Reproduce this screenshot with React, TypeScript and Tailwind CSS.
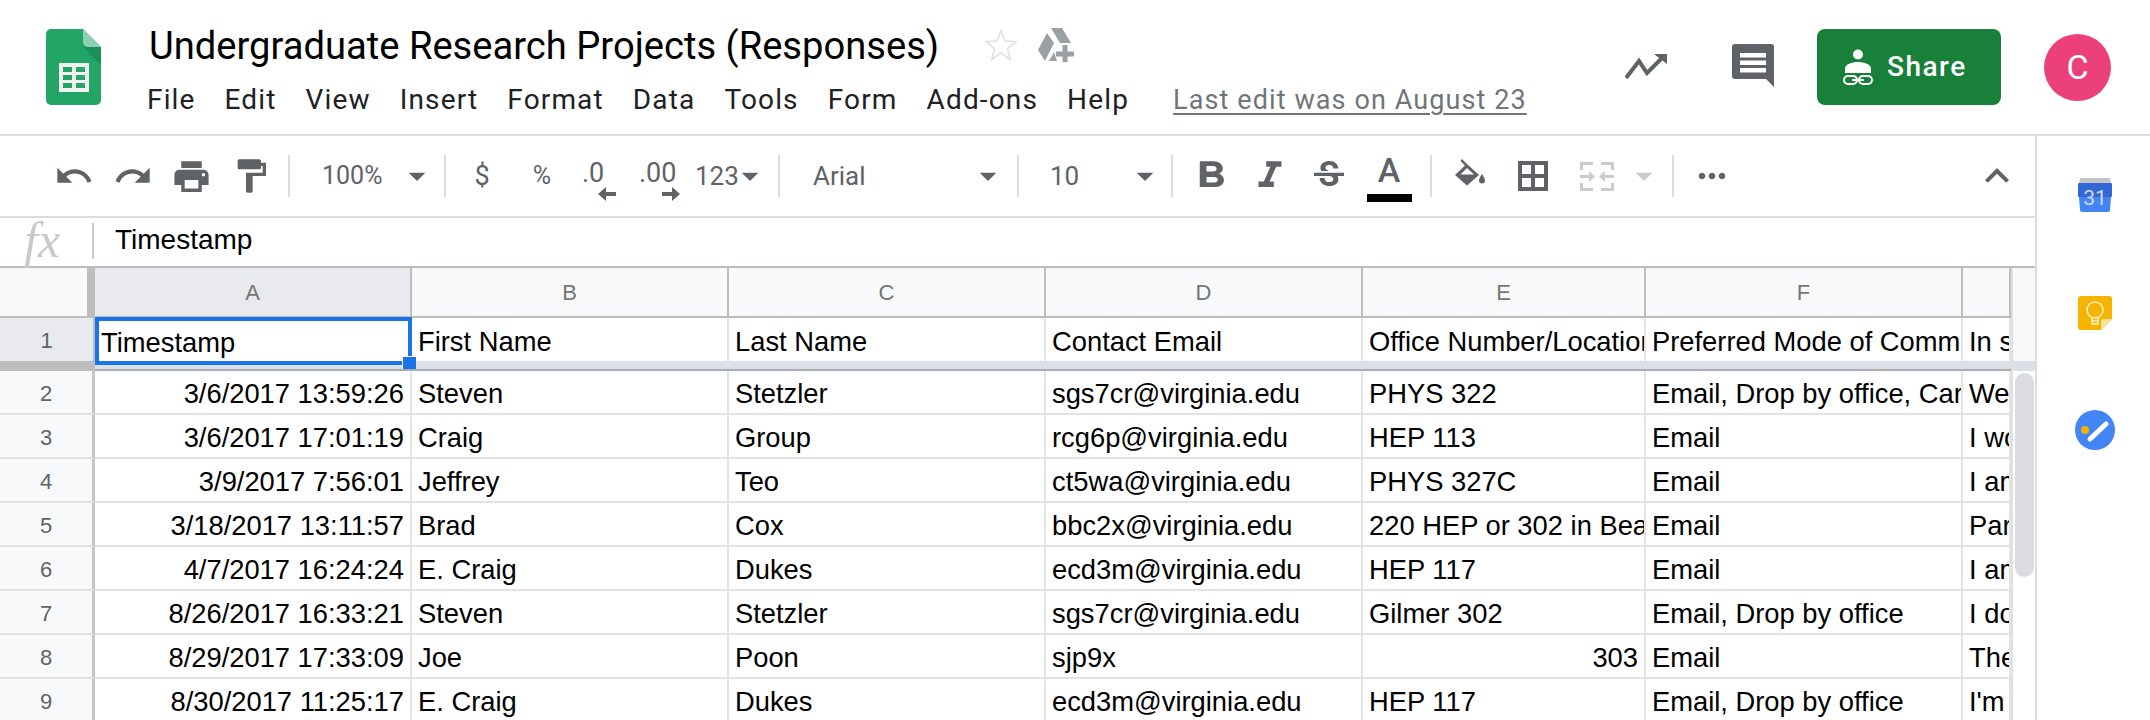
import React from "react";
import {
  MdUndo, MdRedo, MdPrint, MdFormatPaint, MdArrowDropDown, MdFormatBold, MdFormatItalic,
  MdStrikethroughS, MdMoreHoriz, MdExpandLess,
} from "react-icons/md";

const rows: [string, string, string, string, string, string, string, string][] = [
  ["2", "3/6/2017 13:59:26", "Steven", "Stetzler", "sgs7cr@virginia.edu", "PHYS 322", "Email, Drop by office, Career", "We would"],
  ["3", "3/6/2017 17:01:19", "Craig", "Group", "rcg6p@virginia.edu", "HEP 113", "Email", "I would"],
  ["4", "3/9/2017 7:56:01", "Jeffrey", "Teo", "ct5wa@virginia.edu", "PHYS 327C", "Email", "I am"],
  ["5", "3/18/2017 13:11:57", "Brad", "Cox", "bbc2x@virginia.edu", "220 HEP or 302 in Bear", "Email", "Part"],
  ["6", "4/7/2017 16:24:24", "E. Craig", "Dukes", "ecd3m@virginia.edu", "HEP 117", "Email", "I am"],
  ["7", "8/26/2017 16:33:21", "Steven", "Stetzler", "sgs7cr@virginia.edu", "Gilmer 302", "Email, Drop by office", "I do"],
  ["8", "8/29/2017 17:33:09", "Joe", "Poon", "sjp9x", "303", "Email", "The"],
  ["9", "8/30/2017 11:25:17", "E. Craig", "Dukes", "ecd3m@virginia.edu", "HEP 117", "Email, Drop by office", "I'm"],
];

const cols = ["A", "B", "C", "D", "E", "F", ""];
const head = ["Timestamp", "First Name", "Last Name", "Contact Email", "Office Number/Location", "Preferred Mode of Communication", "In s"];
const gridCols = "grid grid-cols-[95px_317px_317px_317px_317px_283px_317px_48px] w-[2011px]";
const cell = "h-full overflow-hidden whitespace-nowrap border-r-2 border-b-2 border-[#e2e3e3] px-[6px] pt-[5px] flex items-center text-[27.33px] text-black";

function Sep() {
  return <div className="w-[2px] h-[42px] bg-[#dadce0] shrink-0" />;
}
function Arrow({ className, light }: { className: string; light?: boolean }) {
  return (
    <div className={`${className} shrink-0 flex justify-center`}>
      <MdArrowDropDown className={`shrink-0 ${light ? "text-[#c9cbcd]" : "text-[#5f6368]"}`} size={40} />
    </div>
  );
}
function Tool({ w, children }: { w: string; children: React.ReactNode }) {
  return <div className={`${w} shrink-0 flex items-center justify-center text-[#5f6368]`}>{children}</div>;
}

export default function App() {
  const menu = ["File", "Edit", "View", "Insert", "Format", "Data", "Tools", "Form", "Add-ons", "Help"];
  return (
    <div className="w-[2150px] h-[720px] overflow-hidden bg-white font-['Roboto',sans-serif] flex flex-col">
      {/* Header */}
      <header className="h-[136px] shrink-0 border-b-2 border-[#dadce0] flex items-start">
        <svg className="ml-[46px] mt-[29px] shrink-0" width="55" height="76" viewBox="0 0 55 76">
          <path d="M5 0h32l18 18v53a5 5 0 0 1-5 5H5a5 5 0 0 1-5-5V5a5 5 0 0 1 5-5z" fill="#23a566" />
          <path d="M37 18l18 18V18z" fill="#1c8f5a" />
          <path d="M37 0l18 18H42a5 5 0 0 1-5-5z" fill="#8ed1b1" />
          <rect x="13" y="34" width="30" height="29" fill="#f1f1f1" />
          <g fill="#23a566">
            <rect x="17" y="38" width="9" height="5" /><rect x="30" y="38" width="9" height="5" />
            <rect x="17" y="46" width="9" height="5" /><rect x="30" y="46" width="9" height="5" />
            <rect x="17" y="54" width="9" height="5" /><rect x="30" y="54" width="9" height="5" />
          </g>
        </svg>
        <div className="ml-[46px] w-[1400px] shrink-0 flex flex-col">
          <div className="flex items-center mt-[23px] h-[46px]">
            <span className="ml-[2px] text-[38.15px] leading-[46px] text-black whitespace-nowrap">Undergraduate Research Projects (Responses)</span>
            <svg className="ml-[46px] -mt-[2px] shrink-0" width="32" height="32" viewBox="0 0 32 32" fill="none" stroke="#dedfe0" strokeWidth="1.500">
              <path d="M16 1.500l4 10.500 11 .6-8.600 7 2.900 10.800L16 24l-9.300 6.400 2.900-10.800-8.600-7 11-.6z" />
            </svg>
            <svg className="ml-[21px] -mt-[2px] shrink-0" width="36" height="34" viewBox="0 0 36 34" fill="#9aa0a6">
              <path d="M0 22L9 5l7 10-9 18z" />
              <path d="M13 0h11l9 15H22z" />
              <path d="M11 33l5-9 3 9z" />
              <path d="M24.500 17h5v6.500H36v5h-6.500V34h-5v-5.500H18v-5h6.500z" />
            </svg>
          </div>
          <nav className="flex items-center h-[38px] mt-[12px] gap-[29px] text-[28px] tracking-[1.15px] text-[#202124] whitespace-nowrap">
            {menu.map((m) => <span key={m}>{m}</span>)}
            <span className="ml-[15px] text-[27px] tracking-[1.1px] text-[#70757a] underline underline-offset-[4px]">Last edit was on August 23</span>
          </nav>
        </div>
        <svg className="ml-[78px] mt-[53px] shrink-0" width="42" height="26" viewBox="0 0 42 26" fill="none">
          <path d="M1 25L14 8l8 12L39 3" stroke="#5f6368" strokeWidth="4" />
          <path d="M29 1h13v10z" fill="#5f6368" />
        </svg>
        <svg className="ml-[65px] mt-[44px] shrink-0" width="42" height="43" viewBox="0 0 42 43">
          <path d="M3 0h36a3 3 0 0 1 3 3v40l-8-8H3a3 3 0 0 1-3-3V3a3 3 0 0 1 3-3z" fill="#5f6368" />
          <path d="M8 9h26v4.500H8zM8 16.500h26V21H8zM8 24h26v4.500H8z" fill="#fff" />
        </svg>
        <button className="ml-[43px] mt-[29px] w-[184px] h-[76px] shrink-0 rounded-[8px] bg-[#188038] text-white flex items-center pl-[26px] gap-[14px] text-[28px] tracking-[1.5px] font-medium">
          <svg width="30" height="36" viewBox="0 0 30 36" fill="none" className="shrink-0">
            <circle cx="15" cy="5.500" r="5" fill="#fff" />
            <path d="M2 24v-4c0-5 7-7 13-7s13 2 13 7v4z" fill="#fff" />
            <rect x="1" y="27" width="13" height="8" rx="4" stroke="#fff" strokeWidth="2" />
            <rect x="16" y="27" width="13" height="8" rx="4" stroke="#fff" strokeWidth="2" />
            <rect x="9" y="30" width="12" height="2" fill="#fff" />
          </svg>
          <span className="-mt-[1px]">Share</span>
        </button>
        <div className="ml-[43px] mt-[34px] w-[67px] h-[67px] shrink-0 rounded-full bg-[#ec407a] text-white flex items-center justify-center text-[34px]">C</div>
      </header>

      <div className="flex flex-1 min-h-0">
        {/* Main */}
        <div className="w-[2035px] shrink-0 flex flex-col border-r-2 border-[#dadce0] box-content">
          {/* Toolbar */}
          <div className="h-[80px] shrink-0 border-b-2 border-[#dadce0] box-content flex items-center pl-[44px] text-[#5f6368]">
            <Tool w="w-[59px]"><MdUndo size={40} /></Tool>
            <Tool w="w-[59px]"><MdRedo size={40} /></Tool>
            <Tool w="w-[59px]"><MdPrint size={41} /></Tool>
            <Tool w="w-[60px]"><MdFormatPaint size={40} /></Tool>
            <div className="w-[7px] shrink-0" />
            <Sep />
            <span className="w-[77px] ml-[32px] shrink-0 text-[25px]">100%</span>
            <Arrow className="w-[36px]" />
            <div className="w-[9px] shrink-0" />
            <Sep />
            <Tool w="w-[72px]"><span className="text-[27px]">$</span></Tool>
            <Tool w="w-[48px]"><span className="text-[25px]">%</span></Tool>
            <div className="relative w-[64px] h-[60px] shrink-0 pl-[16px] pt-[11px] text-[27px] leading-[32px]">
              <span>.0</span>
              <svg className="absolute left-[31px] top-[40px]" width="20" height="16" viewBox="0 0 20 16"><path d="M19 6H9V1L1 8l8 7v-5h10z" fill="#5f6368" /></svg>
            </div>
            <div className="relative w-[60px] h-[60px] shrink-0 pl-[9px] pt-[11px] text-[27px] leading-[32px]">
              <span>.00</span>
              <svg className="absolute left-[31px] top-[40px]" width="20" height="16" viewBox="0 0 20 16"><path d="M1 6h10V1l8 7-8 7v-5H1z" fill="#5f6368" /></svg>
            </div>
            <span className="w-[44px] shrink-0 ml-[5px] text-[26px]">123</span>
            <Arrow className="w-[28px] ml-[-3px]" />
            <div className="w-[14px] shrink-0" />
            <Sep />
            <span className="w-[190px] shrink-0 pl-[33px] text-[26px]">Arial</span>
            <Arrow className="w-[36px]" />
            <div className="w-[11px] shrink-0" />
            <Sep />
            <span className="w-[108px] shrink-0 pl-[31px] text-[26px]">10</span>
            <Arrow className="w-[36px]" />
            <div className="w-[8px] shrink-0" />
            <Sep />
            <Tool w="w-[75px]"><MdFormatBold className="w-[54px] h-[44px] shrink-0" preserveAspectRatio="none" /></Tool>
            <Tool w="w-[44px]"><MdFormatItalic className="w-[46px] h-[44px] shrink-0" preserveAspectRatio="none" /></Tool>
            <Tool w="w-[74px]"><MdStrikethroughS size={40} /></Tool>
            <div className="w-[46px] h-[56px] shrink-0 flex flex-col items-center">
              <span className="h-[44px] text-[34px] leading-[44px] font-medium">A</span>
              <div className="w-[45px] h-[8px] bg-black mt-[2px]" />
            </div>
            <div className="w-[18px] shrink-0" />
            <Sep />
            <Tool w="w-[76px]">
              <svg className="-mt-[8px]" width="30" height="27" viewBox="0 0 30 27" fill="#5f6368">
                <path d="M7 0l5 5 12 11-12 10.500L0 16 10 6.500 5.500 2z" />
                <path d="M5.500 15.500L12 9l7 6.500z" fill="#fff" />
                <path d="M27 15c1.500 2.500 3 4.500 3 6.500a3 3 0 0 1-6 0c0-2 1.500-4 3-6.500z" />
              </svg>
            </Tool>
            <Tool w="w-[50px]">
              <svg width="30" height="30" viewBox="0 0 30 30" fill="none" stroke="#5f6368" strokeWidth="4">
                <rect x="2" y="2" width="26" height="26" />
                <path d="M15 2v26M2 15h26" />
              </svg>
            </Tool>
            <div className="w-[22px] shrink-0" />
            <svg className="shrink-0" width="34" height="29" viewBox="0 0 34 29" fill="none" stroke="#c9cbcd" strokeWidth="3">
              <path d="M1.500 8V1.500H13M32.500 8V1.500H21M1.500 21v6.500H13M32.500 21v6.500H21" />
              <path d="M0 14.500h9M34 14.500h-9" />
              <path d="M9 9l6 5.500L9 20zM25 9l-6 5.500L25 20z" fill="#c9cbcd" stroke="none" />
            </svg>
            <Arrow className="w-[36px] ml-[12px]" light />
            <div className="w-[10px] shrink-0" />
            <Sep />
            <Tool w="w-[75px]"><MdMoreHoriz size={40} /></Tool>
            <div className="flex-1 flex justify-end pr-[14px]"><MdExpandLess size={48} /></div>
          </div>
          {/* Formula bar */}
          <div className="h-[48px] shrink-0 flex items-center border-b-2 border-[#bdbdbd] box-content">
            <span className="w-[92px] pl-[24px] shrink-0 font-['Liberation_Serif',serif] italic text-[50px] leading-[44px] pb-[4px] text-[#c9c9c9]">fx</span>
            <div className="w-[2px] h-[36px] bg-[#ccc] shrink-0 -mt-[3px]" />
            <span className="ml-[21px] pb-[4px] font-['Liberation_Sans',sans-serif] text-[28px] text-black">Timestamp</span>
          </div>
          {/* Grid */}
          <div className="flex flex-1 min-h-0 font-['Liberation_Sans',sans-serif]">
            <div className="w-[2011px] shrink-0 overflow-hidden">
              <div className={`${gridCols} h-[50px]`}>
                <div className="bg-[#f8f9fa] border-b-2 border-[#bdbdbd] border-r-[8px] border-r-[#bdbdbd]" />
                {cols.map((c, i) => (
                  <div key={i} className={`flex items-center justify-center border-r-2 border-b-2 border-[#bdbdbd] text-[22px] text-[#757575] ${i === 0 ? "bg-[#e8eaed]" : "bg-[#f8f9fa]"}`}>{c}</div>
                ))}
              </div>
              <div className={`${gridCols} h-[43px]`}>
                <div className="bg-[#e8eaed] flex items-center justify-center border-r-2 border-[#bdbdbd] text-[22px] text-[#5f6368]">1</div>
                {head.map((h, i) => (
                  i === 0 ? (
                    <div key={i} className="relative h-full">
                      <div className={`${cell} border-none`}>{h}</div>
                      <div className="absolute z-10 left-0 right-0 -top-[1px] -bottom-[1px] border-[4px] border-[#1a73e8]">
                        <div className="absolute -right-[8px] -bottom-[8px] w-[14px] h-[13px] bg-[#1a73e8] border-l border-t border-white" />
                      </div>
                    </div>
                  ) : (
                    <div key={i} className={cell}>{h}</div>
                  )
                ))}
              </div>
              <div className="grid grid-cols-[95px_1916px] h-[10px]">
                <div className="bg-[#bdbdbd]" />
                <div className="bg-[#dadfe8] border-b-2 border-[#a9acb0]" />
              </div>
              {rows.map((r) => (
                <div key={r[0]} className={`${gridCols} h-[44px]`}>
                  <div className="bg-[#f8f9fa] pt-[2px] flex items-center justify-center border-r-[3px] border-b-2 border-r-[#c4c7c5] border-b-[#e0e0e0] text-[22px] text-[#5f6368]">{r[0]}</div>
                  {r.slice(1).map((v, i) => (
                    <div key={i} className={`${cell} ${i === 0 || v === "303" ? "justify-end" : ""}`}>{v}</div>
                  ))}
                </div>
              ))}
            </div>
            {/* Scrollbar */}
            <div className="w-[24px] shrink-0 bg-white border-l-2 border-[#e0e0e0] flex flex-col">
              <div className="h-[93px] bg-[#f8f8f8]" />
              <div className="h-[10px] bg-[#dadfe8]" />
              <div className="mx-auto mt-[2px] w-[19px] h-[204px] rounded-[10px] bg-[#dadce0]" />
            </div>
          </div>
        </div>
        {/* Side panel */}
        <aside className="flex-1 flex flex-col items-center pl-[2px]">
          <svg className="mt-[42px]" width="34" height="34" viewBox="0 0 34 34">
            <path d="M2 0h30l1 6H1z" fill="#c4c4c4" />
            <rect y="5" width="34" height="14" rx="1" fill="#3367d6" />
            <path d="M1 19h32l-1 13a2 2 0 0 1-2 2H4a2 2 0 0 1-2-2z" fill="#4285f4" />
            <text x="17" y="27" textAnchor="middle" fontSize="21" fontFamily="Roboto" fill="#d0dcf5">31</text>
          </svg>
          <svg className="mt-[84px]" width="34" height="34" viewBox="0 0 34 34">
            <path d="M3 0h28a3 3 0 0 1 3 3v20L23 34H3a3 3 0 0 1-3-3V3a3 3 0 0 1 3-3z" fill="#f4b400" />
            <path d="M34 23H26a3 3 0 0 0-3 3v8z" fill="#fbe29a" />
            <circle cx="17" cy="14" r="8" fill="none" stroke="#fdf0c8" strokeWidth="1.500" />
            <path d="M14 22v6h6v-6M14 25h6" fill="none" stroke="#fdf0c8" strokeWidth="1.500" />
          </svg>
          <svg className="mt-[80px]" width="40" height="40" viewBox="0 0 40 40">
            <circle cx="20" cy="20" r="20" fill="#4285f4" />
            <circle cx="10" cy="20" r="4" fill="#f4b400" />
            <path d="M15 29L31 14" stroke="#fff" strokeWidth="5" strokeLinecap="round" />
          </svg>
        </aside>
      </div>
    </div>
  );
}
